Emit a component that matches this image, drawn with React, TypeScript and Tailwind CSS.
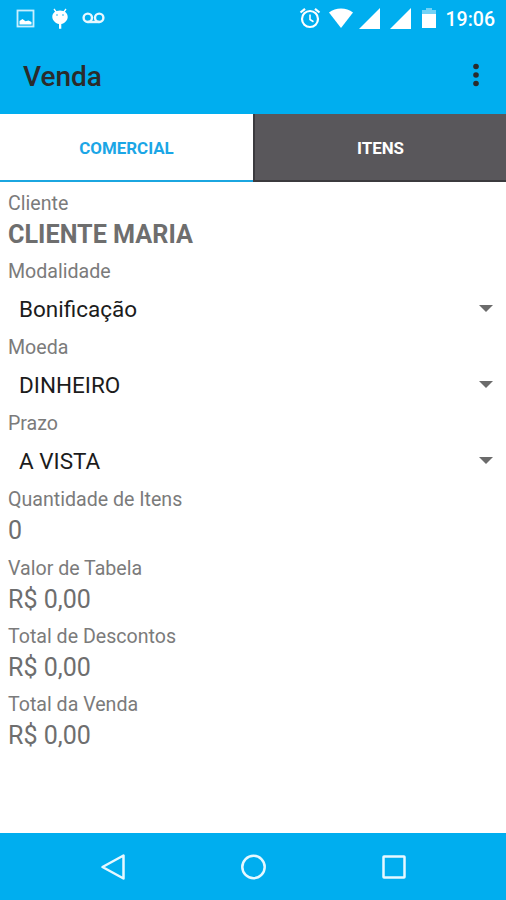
interface FieldProps {
  label: string
  value: string
  bold?: boolean
}

const totals = [
  { label: 'Quantidade de Itens', value: '0' },
  { label: 'Valor de Tabela', value: 'R$ 0,00' },
  { label: 'Total de Descontos', value: 'R$ 0,00' },
  { label: 'Total da Venda', value: 'R$ 0,00' },
]

const selects = [
  { label: 'Modalidade', value: 'Bonificação' },
  { label: 'Moeda', value: 'DINHEIRO' },
  { label: 'Prazo', value: 'A VISTA' },
]

function StatusBar() {
  return (
    <div className="flex h-[37px] items-center justify-between pl-[16px] pr-[11px] text-white">
      <div className="flex items-center">
        <svg className="h-[20px] w-[19px]" viewBox="0 0 19 20" fill="none">
          <rect x="1.5" y="1.5" width="16" height="16" stroke="#c8efff" strokeWidth="1.8" />
          <path d="M3.5 15.500v-3.500l3-2 3 2.200 3-.7 3 1.500v2.500z" fill="white" />
        </svg>
        {/* Android debug head */}
        <svg className="ml-[16px] h-[22px] w-[18px]" viewBox="0 0 18 22" fill="white">
          <path d="M3 1 5.500 4.500M15 1l-2.500 3.500" stroke="white" strokeWidth="1.300" />
          <path d="M9 2.600c4.600 0 7.700 2.800 7.700 6.300S13.500 15.300 10.300 16v4.800H8V16c-3.200-.7-6.700-3.600-6.700-7.100S4.400 2.600 9 2.600z" />
          <circle cx="6" cy="7" r=".9" fill="#5fcbf5" />
          <circle cx="12" cy="7" r=".9" fill="#5fcbf5" />
        </svg>
        <svg className="-mt-[2px] ml-[13px] h-[12px] w-[23px]" viewBox="0 0 23 12" fill="none" stroke="#e8f8ff" strokeWidth="2.400">
          <circle cx="5.800" cy="5.800" r="4.200" />
          <circle cx="17.200" cy="5.800" r="4.200" />
          <path d="M5.800 10h11.400" />
        </svg>
      </div>
      <div className="flex items-center">
        <svg className="-mt-[1px] h-[22px] w-[22px]" viewBox="0 0 22 22" fill="none" stroke="white" strokeWidth="2.200">
          <circle cx="11" cy="12" r="8" />
          <path d="M11 7.500v5l3.500 2.200" strokeWidth="1.600" />
          <path d="M1.500 5.500 6 1.800M20.500 5.500 16 1.800" />
        </svg>
        <svg className="-mt-[1px] ml-[8px] h-[20px] w-[24px]" viewBox="0 0 24 20" fill="white">
          <path d="M12 20 0 4.500C3.500 1.800 7.500.5 12 .5s8.500 1.300 12 4z" />
        </svg>
        <svg className="-mt-[1px] ml-[6px] h-[21px] w-[21px]" viewBox="0 0 21 21" fill="white">
          <path d="M0 21 21 0v21z" />
        </svg>
        <svg className="-mt-[1px] ml-[10px] h-[21px] w-[21px]" viewBox="0 0 21 21" fill="white">
          <path d="M0 21 21 0v21z" />
        </svg>
        <svg className="-mt-[1px] ml-[11px] h-[20px] w-[14px]" viewBox="0 0 14 20" fill="white">
          <path d="M0 2h4V0h6v2h4v4H0z" fillOpacity=".45" />
          <path d="M0 6h14v14H0z" />
        </svg>
        <span className="ml-[10px] pt-[2px] text-[19.500px] font-medium leading-none">19:06</span>
      </div>
    </div>
  )
}

function Field({ label, value, bold }: FieldProps) {
  return (
    <div className="h-[68.250px]">
      <div className="h-[27px] text-[19.600px] leading-[27px] text-[#7b7b7b]">{label}</div>
      <div className={bold ? 'text-[25.200px] font-bold leading-[36px]' : 'text-[25px] leading-[35px]'}>{value}</div>
    </div>
  )
}

function SelectField({ label, value }: FieldProps) {
  return (
    <div className="h-[76px]">
      <div className="h-[27px] text-[19.600px] leading-[27px] text-[#7b7b7b]">{label}</div>
      <button className="flex h-[49px] w-full items-center justify-between pl-[11px] pr-[5px] text-[22.500px] text-[#1c1c1c]">
        {value}
        <svg className="-mt-[2px] h-[7px] w-[14px]" viewBox="0 0 14 7" fill="#6b6b6b">
          <path d="M0 0h14L7 7z" />
        </svg>
      </button>
    </div>
  )
}

export default function App() {
  return (
    <div className="flex h-[900px] w-[506px] flex-col overflow-hidden bg-white font-[Roboto,sans-serif] text-[#6e6e6e]">
      <header className="h-[114px] shrink-0 bg-[#00aeef]">
        <StatusBar />
        <div className="flex h-[77px] items-center justify-between pl-[23px] pr-[27px]">
          <h1 className="pt-[2px] text-[28px] font-medium text-[#2b2b2b]">Venda</h1>
          <svg className="-mt-[1px] h-[24px] w-[6px]" viewBox="0 0 6 24" fill="#2b2b2b">
            <circle cx="3" cy="3.500" r="2.800" />
            <circle cx="3" cy="12" r="2.800" />
            <circle cx="3" cy="20.500" r="2.800" />
          </svg>
        </div>
      </header>

      <nav className="flex h-[68px] shrink-0 text-[16.900px] font-bold">
        <button className="w-[253px] border-b-2 border-[#1ba6e0] pt-[4px] text-[#1ba6e6]">COMERCIAL</button>
        <button className="flex-1 border-b-2 border-l-2 border-[#3b3a3e] bg-[#59575b] pt-[4px] text-white">ITENS</button>
      </nav>

      <main className="flex-1 px-2 pt-[8px]">
        <Field label="Cliente" value="CLIENTE MARIA" bold />
        {selects.map((s) => (
          <SelectField key={s.label} label={s.label} value={s.value} />
        ))}
        {totals.map((t) => (
          <Field key={t.label} label={t.label} value={t.value} />
        ))}
      </main>

      {/* System navigation */}
      <footer className="flex h-[67px] shrink-0 items-center justify-between bg-[#00aeef] pl-[100px] pr-[100px]">
        <svg className="h-[28px] w-[26px]" viewBox="0 0 26 28" fill="none" stroke="#e6f8ff" strokeWidth="2.500">
          <path d="M23.500 2.500v23L2.500 14z" strokeLinejoin="round" />
        </svg>
        <svg className="h-[26px] w-[26px]" viewBox="0 0 26 26" fill="none" stroke="#e6f8ff" strokeWidth="2.500">
          <circle cx="12.500" cy="13" r="11.200" />
        </svg>
        <svg className="h-[24px] w-[24px]" viewBox="0 0 24 24" fill="none" stroke="#e6f8ff" strokeWidth="2.500">
          <rect x="1.500" y="1.500" width="21" height="21" rx=".5" />
        </svg>
      </footer>
    </div>
  )
}
